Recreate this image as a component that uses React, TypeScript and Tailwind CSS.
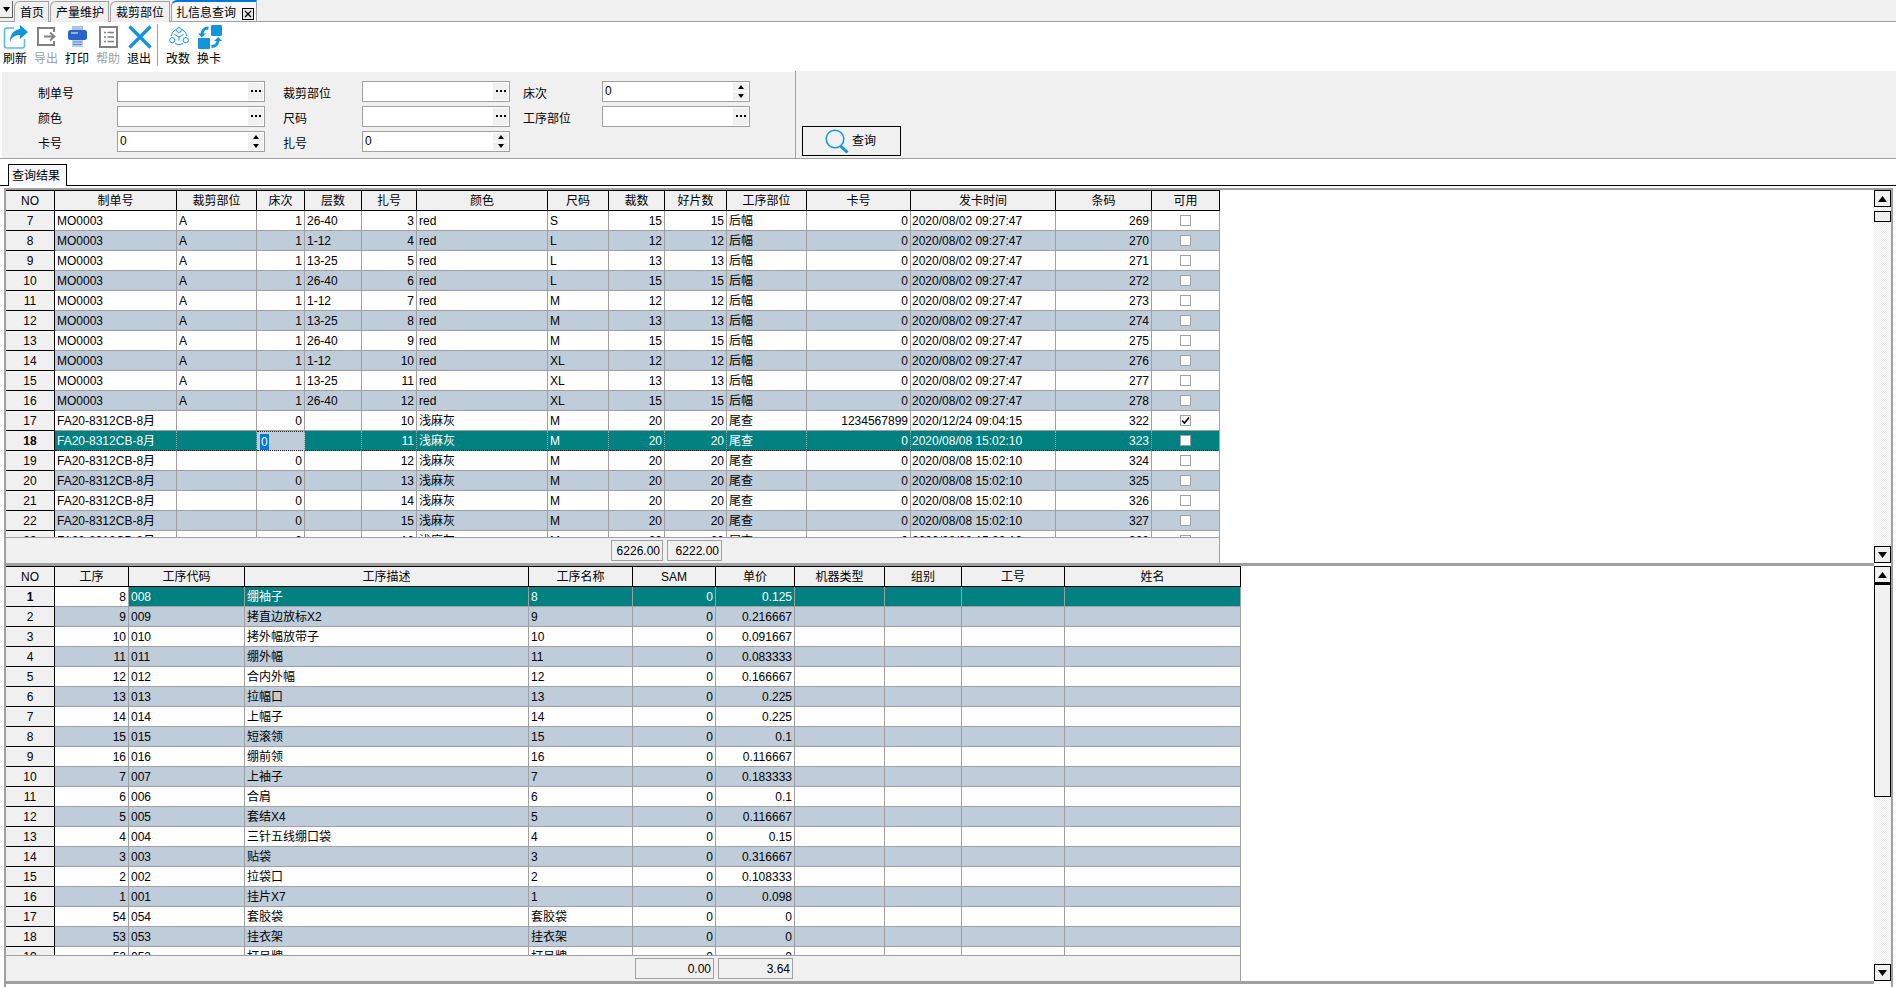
import { ReactNode } from "react";

const topCols = "grid grid-cols-[49px_122px_80px_48px_57px_55px_131px_61px_56px_62px_80px_104px_145px_96px_68px]";
const bottomCols = "grid grid-cols-[49px_74px_116px_284px_104px_83px_79px_90px_77px_103px_176px]";

const topHead = ["NO", "制单号", "裁剪部位", "床次", "层数", "扎号", "颜色", "尺码", "裁数", "好片数", "工序部位", "卡号", "发卡时间", "条码", "可用"];
const bottomHead = ["NO", "工序", "工序代码", "工序描述", "工序名称", "SAM", "单价", "机器类型", "组别", "工号", "姓名"];

const layers = ["26-40", "1-12", "13-25"];
const sizes = ["S", "L", "L", "L", "M", "M", "M", "XL", "XL", "XL"];
const counts = [15, 12, 13, 15, 12, 13, 15, 12, 13, 15];
const barcodes = [269, 270, 271, 272, 273, 274, 275, 276, 277, 278];

type TopRow = {
  no: number;
  order: string;
  part: string;
  bed: string;
  layer: string;
  bundle: number;
  color: string;
  size: string;
  cut: number;
  good: number;
  step: string;
  card: string;
  time: string;
  code: number;
  checked?: boolean;
};

const topRows: TopRow[] = [
  ...counts.map((c, i) => ({
    no: 7 + i,
    order: "MO0003",
    part: "A",
    bed: "1",
    layer: layers[i % 3],
    bundle: 3 + i,
    color: "red",
    size: sizes[i],
    cut: c,
    good: c,
    step: "后幅",
    card: "0",
    time: "2020/08/02 09:27:47",
    code: barcodes[i],
  })),
  ...[0, 1, 2, 3, 4, 5, 6].map((i) => ({
    no: 17 + i,
    order: "FA20-8312CB-8月",
    part: "",
    bed: "0",
    layer: "",
    bundle: 10 + i,
    color: "浅麻灰",
    size: "M",
    cut: 20,
    good: 20,
    step: "尾查",
    card: i === 0 ? "1234567899" : "0",
    time: i === 0 ? "2020/12/24 09:04:15" : "2020/08/08 15:02:10",
    code: 322 + i,
    checked: i === 0,
  })),
];

const bottomRows: [number, string, string, string, string][] = [
  [8, "008", "绷袖子", "8", "0.125"],
  [9, "009", "拷直边放标X2", "9", "0.216667"],
  [10, "010", "拷外幅放带子", "10", "0.091667"],
  [11, "011", "绷外幅", "11", "0.083333"],
  [12, "012", "合内外幅", "12", "0.166667"],
  [13, "013", "拉幅口", "13", "0.225"],
  [14, "014", "上幅子", "14", "0.225"],
  [15, "015", "短滚领", "15", "0.1"],
  [16, "016", "绷前领", "16", "0.116667"],
  [7, "007", "上袖子", "7", "0.183333"],
  [6, "006", "合肩", "6", "0.1"],
  [5, "005", "套结X4", "5", "0.116667"],
  [4, "004", "三针五线绷口袋", "4", "0.15"],
  [3, "003", "贴袋", "3", "0.316667"],
  [2, "002", "拉袋口", "2", "0.108333"],
  [1, "001", "挂片X7", "1", "0.098"],
  [54, "054", "套胶袋", "套胶袋", "0"],
  [53, "053", "挂衣架", "挂衣架", "0"],
  [52, "052", "打吊牌", "打吊牌", "0"],
];

function Triangle({ down = false, size = 7 }: { down?: boolean; size?: number }) {
  return (
    <svg width={size} height={Math.ceil(size / 2) + 1} viewBox="0 0 8 5" preserveAspectRatio="none">
      <path d={down ? "M0 0h8L4 5z" : "M4 0l4 5H0z"} fill="#000" />
    </svg>
  );
}

function IconRefresh() {
  return (
    <svg width="25" height="25" viewBox="0 0 25 25">
      <path d="M11 4H4a2.5 2.5 0 0 0-2.5 2.5v15A2.5 2.5 0 0 0 4 24h15a2.5 2.5 0 0 0 2.5-2.5V15" fill="#fff" stroke="#5db8ea" strokeWidth="1.6" />
      <path d="M17 1l8 7-8 7v-4c-5 0-8 2-10 7 0-7 3-12 10-13z" fill="#1296db" />
    </svg>
  );
}

function IconExport() {
  return (
    <svg width="21" height="21" viewBox="0 0 21 21">
      <path d="M18 6V2H2v17h16v-4" fill="none" stroke="#808080" strokeWidth="2" />
      <path d="M8 10.5h10M14 6.5l4.5 4-4.5 4" fill="none" stroke="#808080" strokeWidth="1.8" />
    </svg>
  );
}

function IconPrint() {
  return (
    <svg width="19" height="21" viewBox="0 0 19 21">
      <path d="M4 0h11v4H4z" fill="#a9c4ec" />
      <rect x="0" y="4" width="19" height="10" rx="2.5" fill="#2a63c9" />
      <path d="M3 7h7" stroke="#fff" strokeWidth="1" />
      <path d="M4 14h11v7H4z" fill="#b9cdee" />
      <path d="M5 16h9M5 18.5h9" stroke="#5e88d4" strokeWidth="1" />
    </svg>
  );
}

function IconHelp() {
  return (
    <svg width="19" height="22" viewBox="0 0 19 22">
      <rect x="1" y="1" width="17" height="20" fill="#fff" stroke="#808080" strokeWidth="2" />
      <path d="M5 6.5h2M8.5 6.5h6.5M5 11h2M8.5 11h6.5M5 15.5h2M8.5 15.5h6.5" stroke="#808080" strokeWidth="1.4" />
    </svg>
  );
}

function IconExit() {
  return (
    <svg width="24" height="24" viewBox="0 0 24 24">
      <path d="M1.5 1.5l21 21M22.5 1.5l-21 21" stroke="#1296db" strokeWidth="3.4" />
    </svg>
  );
}

function IconChange() {
  return (
    <svg width="20" height="19" viewBox="0 0 20 19" fill="none" stroke="#1296db" strokeWidth="1">
      <path d="M7 2.5A8 8 0 0 0 2.2 9M13 2.5A8 8 0 0 1 17.8 9M6 16.6a8 8 0 0 0 8 0" />
      <circle cx="10" cy="3" r="2.4" />
      <circle cx="3.2" cy="13.2" r="2.6" />
      <circle cx="16.8" cy="13.2" r="2.6" />
      <path d="M5.5 7.5L10 10l4.5-2.5M10 10v3.5" />
    </svg>
  );
}

function IconSwap() {
  return (
    <svg width="24" height="24" viewBox="0 0 24 24" fill="#1296db">
      <rect x="13" y="0" width="11" height="11" rx="1" />
      <rect x="0" y="13" width="12" height="11" rx="1" />
      <path d="M10.5 1.5v3C7.5 4.6 6 6 5.5 8.5L8 8.5 3.7 12.5 0 8.5l2.6 0C3 4.5 6 1.6 10.5 1.5z" />
      <path d="M13.5 23v-3c3-.1 4.5-1.5 5-4l-2.500 0 4.300-4 3.700 4-2.600 0c-.4 4-3.400 6.900-7.900 7z" />
    </svg>
  );
}

function IconSearch() {
  return (
    <svg width="25" height="25" viewBox="0 0 25 25" fill="none">
      <circle cx="10" cy="10" r="8.8" stroke="#1296db" strokeWidth="1.5" />
      <path d="M15.5 17l7 6.500" stroke="#1296db" strokeWidth="3" />
    </svg>
  );
}

function ToolButton({ icon, label, disabled = false }: { icon: ReactNode; label: string; disabled?: boolean }) {
  return (
    <div className="w-[31px] flex flex-col items-start">
      <div className="h-[25px] w-[25px] flex items-center justify-center">{icon}</div>
      <span className={`leading-[20px] ${disabled ? "text-[#a0a0a0]" : "text-black"}`}>{label}</span>
    </div>
  );
}

function Tab({ label, className }: { label: string; className: string }) {
  return (
    <div className={`h-[21px] mt-[1px] border-l border-t border-r border-[#a0a0a0] rounded-tl-[6px] flex items-center pt-[2px] leading-[20px] bg-[#f0f0f0] ${className}`}>
      {label}
    </div>
  );
}

function PickInput() {
  return (
    <div className="h-[21px] border border-[#a0a0a0] bg-white flex justify-end p-[1px]">
      <div className="w-[15px] bg-[#f0f0f0] flex items-center justify-center gap-[2px] pb-[1px]">
        <span className="w-[2px] h-[2px] bg-black" />
        <span className="w-[2px] h-[2px] bg-black" />
        <span className="w-[2px] h-[2px] bg-black" />
      </div>
    </div>
  );
}

function SpinInput() {
  return (
    <div className="h-[21px] border border-[#a0a0a0] bg-white flex justify-between p-[1px]">
      <span className="pl-[1px] leading-[16px]">0</span>
      <div className="w-[15px] flex flex-col gap-[1px]">
        <div className="flex-1 bg-[#f0f0f0] flex items-center justify-center"><Triangle size={6} /></div>
        <div className="flex-1 bg-[#f0f0f0] flex items-center justify-center"><Triangle down size={6} /></div>
      </div>
    </div>
  );
}

function Label({ text }: { text: string }) {
  return <div className="leading-[26px] h-[21px]">{text}</div>;
}

function FormPanel() {
  return (
    <div className="h-[88px] flex border-b border-[#a0a0a0]">
      <div className="ml-[2px] w-[793px] mt-[1px] bg-[#f0f0f0] pl-[36px] pt-[9px] grid grid-cols-[79px_148px_18px_79px_148px_13px_79px_148px] grid-rows-[21px_21px_21px] gap-y-[4px]">
        <Label text="制单号" />
        <PickInput />
        <div />
        <Label text="裁剪部位" />
        <PickInput />
        <div />
        <Label text="床次" />
        <SpinInput />
        <Label text="颜色" />
        <PickInput />
        <div />
        <Label text="尺码" />
        <PickInput />
        <div />
        <Label text="工序部位" />
        <PickInput />
        <Label text="卡号" />
        <SpinInput />
        <div />
        <Label text="扎号" />
        <SpinInput />
      </div>
      <div className="flex-1 border-l border-[#a0a0a0] bg-[#f0f0f0] pl-[6px] pb-[2px] flex items-end">
        <div className="w-[99px] h-[30px] border border-black flex items-center pl-[22px] gap-[2px]">
          <IconSearch />
          <span>查询</span>
        </div>
      </div>
    </div>
  );
}

function Cell({ children, className = "" }: { children?: ReactNode; className?: string }) {
  return <div className={`h-[20px] leading-[21px] border-r border-b whitespace-nowrap overflow-hidden ${className}`}>{children}</div>;
}

function HeadRow({ cols, head }: { cols: string; head: string[] }) {
  return (
    <div className={`${cols} h-[21px] border-t border-black bg-[#f0f0f0] shrink-0`}>
      {head.map((h) => (
        <Cell key={h} className="border-black text-center">{h}</Cell>
      ))}
    </div>
  );
}

function CheckBox({ checked }: { checked?: boolean }) {
  return (
    <span className="w-[11px] h-[11px] border border-[#a0a0a0] bg-white flex items-center justify-center">
      {checked && (
        <svg width="9" height="9" viewBox="0 0 9 9">
          <path d="M1 4.500l2.500 2.500L8 1.500" fill="none" stroke="#000" strokeWidth="1.600" />
        </svg>
      )}
    </span>
  );
}

function TopGridRow({ row, index }: { row: TopRow; index: number }) {
  const selected = row.no === 18;
  const bg = selected
    ? "bg-[#008080] text-white border-y-[#222] border-dotted border-r-[#a0a0a0]"
    : index % 2 === 1
      ? "bg-[#bfcddb] border-[#a0a0a0]"
      : "bg-white border-[#a0a0a0]";
  const left = `${bg} pl-[2px]`;
  const right = `${bg} pr-[2px] text-right`;
  return (
    <div className={topCols}>
      <Cell className={`bg-[#f0f0f0] border-black text-center ${selected ? "font-bold" : ""}`}>{row.no}</Cell>
      <Cell className={left}>{row.order}</Cell>
      <Cell className={left}>{row.part}</Cell>
      {selected ? (
        <Cell className="bg-[#bfcddb] border-y border-dotted border-y-[#222] border-r-[#a0a0a0] pl-[3px] leading-[19px]">
          <span className="bg-[#0078d7] text-white px-[1px] inline-block leading-[16px]">{row.bed}</span>
        </Cell>
      ) : (
        <Cell className={right}>{row.bed}</Cell>
      )}
      <Cell className={left}>{row.layer}</Cell>
      <Cell className={right}>{row.bundle}</Cell>
      <Cell className={left}>{row.color}</Cell>
      <Cell className={left}>{row.size}</Cell>
      <Cell className={right}>{row.cut}</Cell>
      <Cell className={right}>{row.good}</Cell>
      <Cell className={left}>{row.step}</Cell>
      <Cell className={right}>{row.card}</Cell>
      <Cell className={`${bg} pl-[1px]`}>{row.time}</Cell>
      <Cell className={right}>{row.code}</Cell>
      <Cell className={`${bg} flex items-center justify-center`}>
        <CheckBox checked={row.checked} />
      </Cell>
    </div>
  );
}

function BottomGridRow({ row, index }: { row: [number, string, string, string, string]; index: number }) {
  const selected = index === 0;
  const bg = selected ? "bg-[#008080] text-white border-[#a0a0a0]" : index % 2 === 1 ? "bg-[#bfcddb] border-[#a0a0a0]" : "bg-white border-[#a0a0a0]";
  const left = `${bg} pl-[2px]`;
  const right = `${bg} pr-[2px] text-right`;
  return (
    <div className={bottomCols}>
      <Cell className={`bg-[#f0f0f0] border-black text-center ${selected ? "font-bold" : ""}`}>{index + 1}</Cell>
      <Cell className={selected ? "bg-white border-[#a0a0a0] pr-[2px] text-right" : right}>{row[0]}</Cell>
      <Cell className={left}>{row[1]}</Cell>
      <Cell className={left}>{row[2]}</Cell>
      <Cell className={left}>{row[3]}</Cell>
      <Cell className={right}>0</Cell>
      <Cell className={right}>{row[4]}</Cell>
      <Cell className={bg} />
      <Cell className={bg} />
      <Cell className={bg} />
      <Cell className={bg} />
    </div>
  );
}

function SumBox({ value, className }: { value: string; className: string }) {
  return <div className={`h-[21px] border border-[#a0a0a0] text-right pr-[2px] leading-[21px] ${className}`}>{value}</div>;
}

function ScrollButton({ down = false }: { down?: boolean }) {
  return (
    <div className="h-[17px] w-[17px] shrink-0 border border-black bg-[#f0f0f0] flex items-center justify-center">
      <Triangle down={down} size={9} />
    </div>
  );
}

const track = "bg-[repeating-conic-gradient(#ececec_0_25%,#ffffff_0_50%)] bg-[length:2px_2px]";

function TopSection() {
  return (
    <div className="h-[376px] flex">
      <div className="flex-1 flex flex-col border-b-[3px] border-[#a0a0a0] min-w-0">
        <div className="w-[1214px] flex-1 flex flex-col min-h-0">
          <HeadRow cols={topCols} head={topHead} />
          <div className="flex-1 overflow-hidden border-r border-[#a0a0a0] min-h-0">
            {topRows.map((r, i) => (
              <TopGridRow key={r.no} row={r} index={i} />
            ))}
          </div>
          <div className="h-[26px] shrink-0 bg-[#f0f0f0] border-t border-r border-[#a0a0a0] flex items-start pt-[2px] pl-[605px] gap-[4px]">
            <SumBox value="6226.00" className="w-[52px]" />
            <SumBox value="6222.00" className="w-[55px]" />
          </div>
        </div>
      </div>
      <div className="w-[17px] flex flex-col pb-[3px]">
        <ScrollButton />
        <div className={`flex-1 flex flex-col pt-[4px] ${track}`}>
          <div className="h-[11px] border border-black bg-[#f0f0f0]" />
        </div>
        <ScrollButton down />
      </div>
    </div>
  );
}

function BottomSection() {
  return (
    <div className="h-[418px] flex">
      <div className="flex-1 flex flex-col border-b-[3px] border-[#a0a0a0] min-w-0">
        <div className="w-[1235px] flex-1 flex flex-col min-h-0">
          <HeadRow cols={bottomCols} head={bottomHead} />
          <div className="flex-1 overflow-hidden border-r border-[#a0a0a0] min-h-0">
            {bottomRows.map((r, i) => (
              <BottomGridRow key={r[0]} row={r} index={i} />
            ))}
          </div>
          <div className="h-[26px] shrink-0 bg-[#f0f0f0] border-t border-r border-[#a0a0a0] flex items-start pt-[2px] pl-[629px] gap-[4px]">
            <SumBox value="0.00" className="w-[79px]" />
            <SumBox value="3.64" className="w-[75px]" />
          </div>
        </div>
      </div>
      <div className="w-[17px] flex flex-col pb-[3px]">
        <ScrollButton />
        <div className={`flex-1 flex flex-col ${track}`}>
          <div className="h-[214px] border border-t-[2px] border-black bg-[#f0f0f0]" />
        </div>
        <ScrollButton down />
      </div>
    </div>
  );
}

export default function App() {
  return (
    <div className="w-[1896px] h-[987px] overflow-hidden bg-white text-black text-[12px] font-['Liberation_Sans','Noto_Sans_CJK_SC',sans-serif] flex flex-col">
      {/* tab strip */}
      <div className="h-[22px] shrink-0 bg-[#f0f0f0] border-b border-[#a0a0a0] flex items-start">
        <div className="w-[13px] h-[17px] mt-[1px] mr-[1px] border-r border-b border-[#606060] bg-[#f0f0f0] flex items-center justify-center">
          <Triangle down />
        </div>
        <Tab label="首页" className="w-[35px] pl-[5px] mr-[1px]" />
        <Tab label="产量维护" className="w-[59px] pl-[5px] mr-[1px]" />
        <Tab label="裁剪部位" className="w-[60px] pl-[5px] mr-[1px]" />
        <div className="relative h-[21px] w-[86px] border-t-2 border-t-[#0078d7] border-x border-x-[#a0a0a0] rounded-tl-[6px] bg-[#f7f7f7] pl-[4px] leading-[22px]">
          扎信息查询
          <div className="absolute right-[2px] top-[6px] w-[12px] h-[12px] border border-black bg-[#e8e8e8] flex items-center justify-center">
            <svg width="8" height="8" viewBox="0 0 8 8">
              <path d="M1 1l6 6M7 1l-6 6" stroke="#000" strokeWidth="1.400" />
            </svg>
          </div>
        </div>
      </div>

      {/* toolbar */}
      <div className="h-[49px] shrink-0 flex pl-[3px] pt-[2px]">
        <ToolButton icon={<IconRefresh />} label="刷新" />
        <ToolButton icon={<IconExport />} label="导出" disabled />
        <ToolButton icon={<IconPrint />} label="打印" />
        <ToolButton icon={<IconHelp />} label="帮助" disabled />
        <ToolButton icon={<IconExit />} label="退出" />
        <div className="w-px h-[42px] bg-[#a0a0a0] ml-[-1px] mr-[8px]" />
        <ToolButton icon={<IconChange />} label="改数" />
        <ToolButton icon={<IconSwap />} label="换卡" />
      </div>

      <FormPanel />

      {/* result tab */}
      <div className="h-[27px] shrink-0 border-b border-black flex items-end pl-[8px]">
        <div className="w-[59px] h-[22px] border-x border-t border-black bg-[#f8f8f8] pl-[3px] leading-[23px] mb-[-1px]">查询结果</div>
      </div>
      <div className="h-[2px] shrink-0" />

      <div className="flex-1 ml-[4px] mr-[3px] border-t-2 border-l-2 border-r-2 border-[#a0a0a0] flex flex-col min-h-0 box-border">
        <TopSection />
        <BottomSection />
      </div>
    </div>
  );
}
